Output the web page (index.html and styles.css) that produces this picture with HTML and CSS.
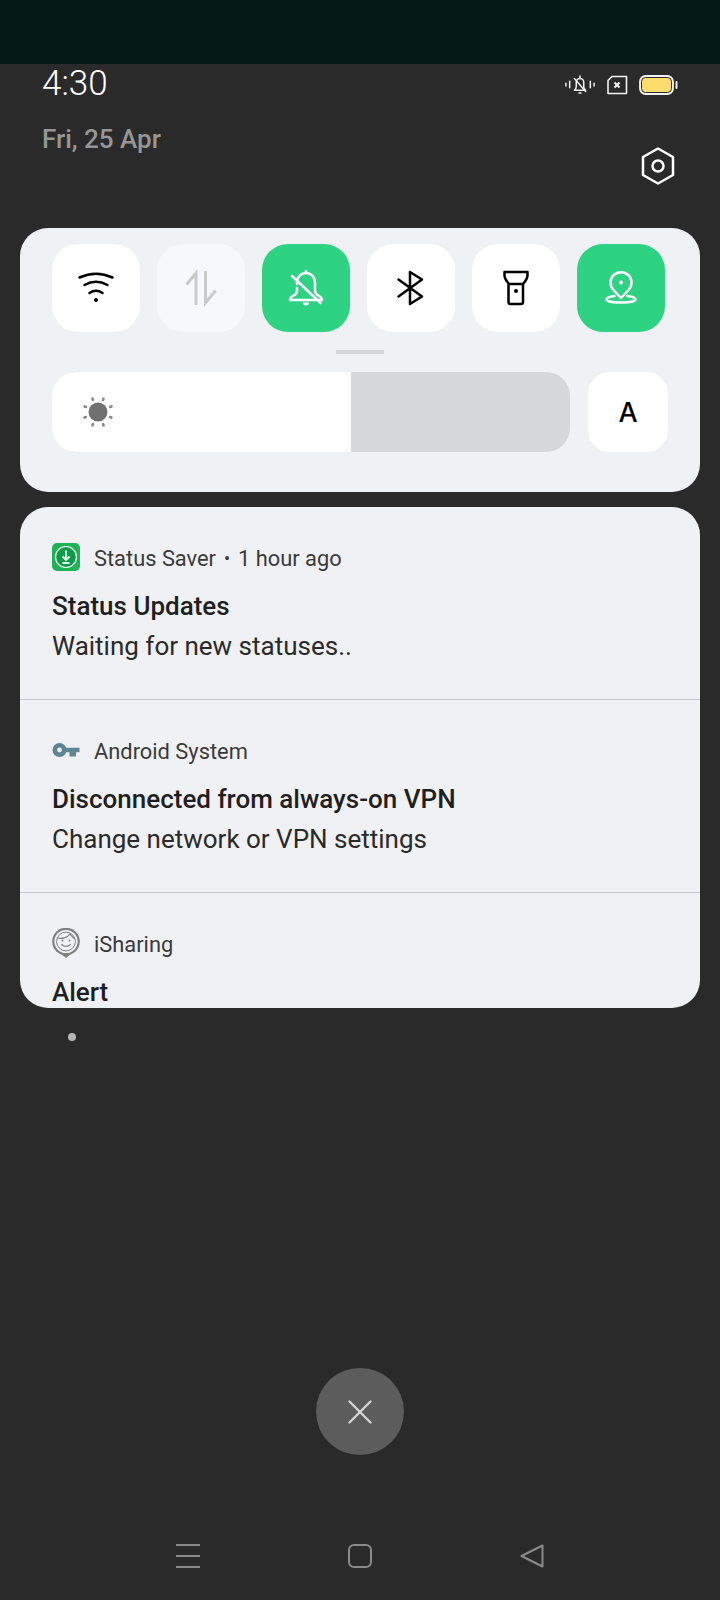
FILE: index.html
```html
<!DOCTYPE html>
<html lang="en">
<head>
  <meta charset="UTF-8" />
  <meta name="viewport" content="width=device-width, initial-scale=1.0"/>
  <title>Notification Shade</title>
  <link rel="stylesheet" href="styles.css">
</head>
<body>

  <div class="scrim"></div>

  <header class="head">
    <div>
      <div class="time">4:30</div>
      <div class="date">Fri, 25 Apr</div>
    </div>
    <div class="head-right">
      <div class="status">
        <svg class="ic-mute" width="30" height="22" viewBox="0 0 32 22" fill="none" stroke="#f2f2f2" stroke-width="1.600" stroke-linecap="round" stroke-linejoin="round">
          <path d="M1 9v3M5 7v7M27 7v7M31 9v3"/>
          <path d="M10 16.500c1.500-1 2-2 2-4V8a4 4 0 0 1 8 0v5c0 1.500 1 2.500 2 3.500z"/>
          <path d="M16 1.500v2M15 19.500h2M10 4l12 14"/>
        </svg>
        <svg width="22" height="20" viewBox="0 0 22 20" fill="none" stroke="#f2f2f2" stroke-width="1.600" stroke-linejoin="round">
          <path d="M6 1.500h14.500v17H2V5.500z"/>
          <path d="M8.500 7.500l5 5M13.500 7.500l-5 5" stroke-width="2"/>
        </svg>
        <svg width="39" height="20" viewBox="0 0 39 20">
          <rect x="1" y="1" width="33" height="18" rx="5.500" fill="#ffdc6e" stroke="#f2f2f2" stroke-width="1.800"/>
          <rect x="2.500" y="2.500" width="30" height="15" rx="4" fill="none" stroke="#2a2a2a" stroke-width="1"/>
          <rect x="36.500" y="6" width="2" height="8" rx="1" fill="#f2f2f2"/>
        </svg>
      </div>
      <svg class="settings" width="36" height="38" viewBox="0 0 36 38" fill="none" stroke="#fff" stroke-width="2.500" stroke-linejoin="round">
        <path d="M18 1.500 33 10v18L18 36.500 3 28V10z"/>
        <circle cx="18" cy="19" r="5.500"/>
      </svg>
    </div>
  </header>

  <section class="panel">
    <div class="tiles">
      <div class="tile">
        <svg width="48" height="48" viewBox="0 0 48 48" fill="none" stroke="#000" stroke-width="2.500" stroke-linecap="round">
          <path d="M7.500 13.500Q24 6 40.500 13.500"/>
          <path d="M12.500 21Q24 14.500 35.500 21"/>
          <path d="M17.500 29Q24 24.500 30.500 29"/>
          <circle cx="24" cy="36" r="2" fill="#000" stroke="none"/>
        </svg>
      </div>
      <div class="tile tile-off">
        <svg width="48" height="48" viewBox="0 0 48 48" fill="none" stroke="#cacaca" stroke-width="3">
          <path d="M19 41V9L9.500 20.500"/>
          <path d="M28.500 7v32l10-12.500"/>
        </svg>
      </div>
      <div class="tile tile-on">
        <svg width="48" height="48" viewBox="0 0 48 48" fill="none" stroke="#fff" stroke-width="2.500" stroke-linecap="round" stroke-linejoin="round">
          <path d="M15 20v-2a9 9 0 0 1 18 0v9c0 2.500 1.500 3.500 4 5s3 2 3 4H8c0-2 1-3 3-4s4-2.500 4-5v-3"/>
          <path d="M24 7v2M10 12l28.500 27"/>
          <path d="M21 38.500a3 3 0 0 0 6 0z" fill="#fff" stroke="none"/>
        </svg>
      </div>
      <div class="tile">
        <svg width="48" height="48" viewBox="0 0 48 48" fill="none" stroke="#000" stroke-width="2.500" stroke-linecap="round" stroke-linejoin="round">
          <path d="M11.500 15.500 35 32.500 23 40V8l12 7.500-23.500 17"/>
        </svg>
      </div>
      <div class="tile">
        <svg width="48" height="48" viewBox="0 0 48 48" fill="none" stroke="#000" stroke-width="2.500" stroke-linejoin="round">
          <path d="M12.500 8h23v3.500c0 3-1.500 5-4.500 8.500H17c-3-3.500-4.500-5.500-4.500-8.500z"/>
          <path d="M16.500 20v18a2 2 0 0 0 2 2H29a2 2 0 0 0 2-2V20"/>
          <circle cx="24" cy="27" r="2" fill="#000" stroke="none"/>
        </svg>
      </div>
      <div class="tile tile-on">
        <svg width="48" height="48" viewBox="0 0 48 48" fill="none" stroke="#fff" stroke-width="2.500" stroke-linecap="round" stroke-linejoin="round">
          <path d="M24 34l-7.500-8a10.500 10.500 0 1 1 15 0z"/>
          <circle cx="24" cy="18.500" r="2" fill="#fff" stroke="none"/>
          <path d="M17.500 32c-5 .7-8 2-8 3.500 0 2 6.500 3 14.500 3s14.500-1 14.500-3c0-1.500-3-2.800-8-3.500"/>
        </svg>
      </div>
    </div>
    <div class="handle"></div>
    <div class="bright-row">
      <div class="slider">
        <div class="slider-fill">
          <svg width="36" height="36" viewBox="0 0 36 36" stroke="#8a8a8a" stroke-width="2.600" stroke-linecap="round">
            <circle cx="18" cy="18" r="9.500" fill="#707070" stroke="none"/>
            <path d="M18 3.500v1.500M18 31v1.500M3.500 18H5M31 18h1.500M7.700 7.700l1 1M27.300 27.300l1 1M7.700 28.300l1-1M27.300 8.700l1-1" transform="rotate(22.500 18 18)"/>
          </svg>
        </div>
      </div>
      <div class="auto">A</div>
    </div>
  </section>

  <section class="notes">
    <article class="note">
      <div class="note-head">
        <svg width="28" height="28" viewBox="0 0 28 28">
          <rect width="28" height="28" rx="5" fill="#1eb354"/>
          <circle cx="14" cy="14" r="10.500" fill="#0f9c48" stroke="#fff" stroke-width="1.200"/>
          <path d="M14 7.500v9M10.500 13.500 14 17l3.500-3.500M10.500 20h7" fill="none" stroke="#e8f7ee" stroke-width="1.800"/>
        </svg>
        <span>Status Saver</span><span class="sep">•</span><span>1 hour ago</span>
      </div>
      <div class="note-title">Status Updates</div>
      <div class="note-body">Waiting for new statuses..</div>
    </article>

    <article class="note">
      <div class="note-head">
        <svg width="28" height="28" viewBox="0 0 28 28" fill="none">
          <circle cx="7.500" cy="14" r="4.700" stroke="#5f8494" stroke-width="4.600"/>
          <path d="M13 11.700h14.500v4.500h-3.500v4.300h-6.500v-4.300H13z" fill="#5f8494"/>
        </svg>
        <span>Android System</span>
      </div>
      <div class="note-title">Disconnected from always-on VPN</div>
      <div class="note-body">Change network or VPN settings</div>
    </article>

    <article class="note">
      <div class="note-head">
        <svg width="28" height="30" viewBox="0 0 28 30" fill="none">
          <path d="M8 25 14 30l6-5z" fill="#808080"/>
          <circle cx="14" cy="13.500" r="13.800" fill="#808080"/>
          <circle cx="14" cy="13.500" r="11.600" fill="#f0f1f5"/>
          <circle cx="14" cy="13.500" r="9.400" stroke="#808080" stroke-width="1"/>
          <path d="M5.500 10c4 1 10 0 12.500-4 1 2 3 3 4.500 5" stroke="#808080" stroke-width="1.200"/>
          <path d="M9.500 16c1.500 3 7.500 3 9 0" stroke="#808080" stroke-width="1.200"/>
          <circle cx="10.500" cy="12.500" r="1" fill="#808080"/>
          <circle cx="17.500" cy="12.500" r="1" fill="#808080"/>
        </svg>
        <span>iSharing</span>
      </div>
      <div class="note-title">Alert</div>
    </article>
  </section>

  <div class="page-dot"></div>

  <div class="close">
    <svg width="24" height="24" viewBox="0 0 24 24" fill="none" stroke="#d8d8d8" stroke-width="2.200" stroke-linecap="round">
      <path d="M1.500 1.500l21 21M22.500 1.500l-21 21"/>
    </svg>
  </div>

  <nav class="nav">
    <svg width="24" height="24" viewBox="0 0 24 24" fill="none" stroke="#8a8a8a" stroke-width="2">
      <path d="M0 1h24M0 12h24M0 23h24"/>
    </svg>
    <svg width="24" height="24" viewBox="0 0 24 24" fill="none" stroke="#8a8a8a" stroke-width="2">
      <rect x="1" y="1" width="22" height="22" rx="5"/>
    </svg>
    <svg width="24" height="24" viewBox="0 0 24 24" fill="none" stroke="#8a8a8a" stroke-width="2" stroke-linejoin="round">
      <path d="M1.500 12 22.500 1.500v21z"/>
    </svg>
  </nav>

</body>
</html>
```

FILE: styles.css
```css
* {
  box-sizing: border-box;
}

body {
  margin: 0;
  width: 720px;
  height: 1600px;
  overflow: hidden;
  background: #2a2a2a;
  font-family: Roboto, 'Noto Sans', sans-serif;
  color: #1f1f1f;
}

svg {
  display: block;
  flex: none;
}

.scrim {
  height: 64px;
  background: #041a14;
}

.head {
  display: flex;
  justify-content: space-between;
  height: 164px;
  padding: 0 42px;
}

.time {
  font-size: 35px;
  font-weight: 300;
  line-height: 40px;
  color: #fff;
}

.date {
  margin-top: 19px;
  font-size: 26px;
  font-weight: 500;
  line-height: 32px;
  color: #969696;
}

.head-right {
  display: flex;
  flex-direction: column;
  align-items: flex-end;
}

.status {
  display: flex;
  align-items: center;
  gap: 11px;
  margin-top: 10px;
}

.settings {
  margin: 51px 2px 0 0;
}

.panel {
  height: 264px;
  margin: 0 20px;
  padding: 16px 32px 0;
  background: #f0f1f5;
  border-radius: 28px;
}

.tiles {
  display: flex;
  gap: 17px;
}

.tile {
  display: flex;
  align-items: center;
  justify-content: center;
  width: 88px;
  height: 88px;
  background: #fff;
  border-radius: 26px;
}

.tile-off {
  background: #f7f8fb;
}

.tile-on {
  background: #2dd282;
}

.handle {
  width: 48px;
  height: 4px;
  margin: 18px auto 18px;
  background: #d5d6da;
}

.bright-row {
  display: flex;
  gap: 18px;
}

.slider {
  width: 518px;
  height: 80px;
  background: #d6d7db;
  border-radius: 24px;
  overflow: hidden;
}

.slider-fill {
  display: flex;
  align-items: center;
  width: 299px;
  height: 80px;
  padding-left: 28px;
  background: #fff;
}

.auto {
  display: flex;
  align-items: center;
  justify-content: center;
  width: 80px;
  height: 80px;
  background: #fff;
  border-radius: 22px;
  font-family: Inter, Roboto, sans-serif;
  font-size: 27px;
  font-weight: 500;
  color: #000;
}

.notes {
  height: 501px;
  margin: 15px 20px 0;
  background: #f0f1f5;
  border-radius: 28px;
  overflow: hidden;
}

.note {
  height: 193px;
  padding: 36px 32px 0;
  border-bottom: 1px solid #c8c9ce;
}

.note:last-child {
  border-bottom: 0;
}

.note-head {
  display: flex;
  align-items: center;
  height: 28px;
  margin-bottom: 15px;
  font-size: 21.85px;
  color: #3a3a3a;
}

.note-head span {
  padding-top: 2px;
}

.note-head svg {
  margin-right: 14px;
}

.sep {
  margin: 0 8px;
  font-size: 18px;
}

.note-title {
  font-size: 26px;
  font-weight: 500;
  line-height: 40px;
  color: #1f1f1f;
}

.note-body {
  font-size: 26px;
  line-height: 40px;
  color: #2a2a2a;
}

.page-dot {
  width: 8px;
  height: 8px;
  margin: 25px 0 0 68px;
  background: #b5b5b5;
  border-radius: 50%;
}

.close {
  display: flex;
  align-items: center;
  justify-content: center;
  width: 88px;
  height: 87px;
  margin: 327px 0 0 316px;
  background: #5c5c5c;
  border-radius: 50%;
}

.nav {
  display: flex;
  gap: 148px;
  margin-top: 89px;
  padding-left: 176px;
}
```
